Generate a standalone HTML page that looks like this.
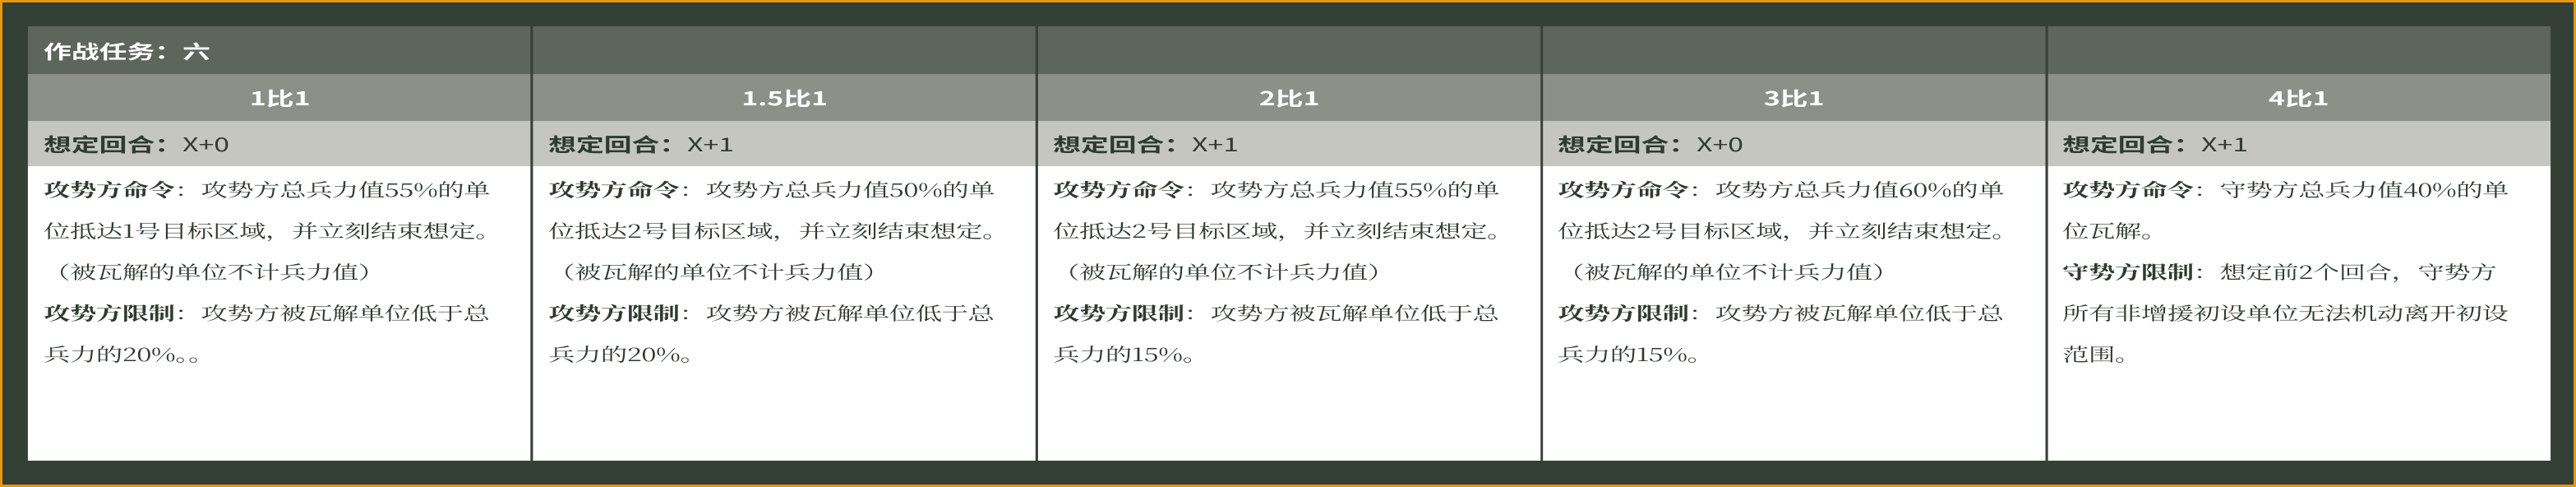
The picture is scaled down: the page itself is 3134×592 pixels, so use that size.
<!DOCTYPE html>
<html><head><meta charset="utf-8"><style>
html,body{margin:0;padding:0}
body{width:3134px;height:592px;overflow:hidden;background:#e8960c;position:relative}
.bg{position:absolute;left:3px;top:3px;right:3px;bottom:3px;background:#344035}
.wrap{position:absolute;left:0;top:0;width:2132px;height:592px;transform:scaleX(1.47);transform-origin:0 0;font-family:"Noto Serif CJK SC",serif;color:#2f3a30}
.col{position:absolute;top:32px;width:417.3px;height:528px;overflow:hidden}
.r1{position:absolute;left:0;right:0;top:0;height:58px;background:#5d655c}
.r2{position:absolute;left:0;right:0;top:58px;height:57px;background:#8d9089;color:#fff;font-weight:bold;font-size:23px;line-height:57px;text-align:center;font-family:"Noto Sans CJK SC",sans-serif}
.r3{position:absolute;left:0;right:0;top:115px;height:55px;background:#c5c6c0;font-size:23px;line-height:55px;padding-left:13px;font-family:"Noto Sans CJK SC",sans-serif}
.r3 b{font-weight:bold}
.r4{position:absolute;left:0;right:0;top:170px;bottom:0;background:#fff;font-size:22px;line-height:50px;padding:4px 0 0 13px;box-sizing:border-box;white-space:nowrap;letter-spacing:-0.3px}
.div{position:absolute;top:32px;width:2px;height:530px;background:#3a3f3a}
.title{position:absolute;left:13px;top:0;line-height:58px;color:#fff;font-weight:bold;font-size:23px;font-family:"Noto Sans CJK SC",sans-serif}
</style></head><body>
<div class="bg"></div>
<div class="wrap">
<div class="col" style="left:23.1px">
<div class="r1"><div class="title">作战任务：六</div></div>
<div class="r2">1比1</div>
<div class="r3"><b>想定回合：</b>X+0</div>
<div class="r4"><b>攻势方命令</b>：攻势方总兵力值55%的单<br>位抵达1号目标区域，并立刻结束想定。<br>（被瓦解的单位不计兵力值）<br><b>攻势方限制</b>：攻势方被瓦解单位低于总<br>兵力的20%。。</div>
</div>
<div class="col" style="left:440.8px">
<div class="r1"></div>
<div class="r2">1.5比1</div>
<div class="r3"><b>想定回合：</b>X+1</div>
<div class="r4"><b>攻势方命令</b>：攻势方总兵力值50%的单<br>位抵达2号目标区域，并立刻结束想定。<br>（被瓦解的单位不计兵力值）<br><b>攻势方限制</b>：攻势方被瓦解单位低于总<br>兵力的20%。</div>
</div>
<div class="col" style="left:858.5px">
<div class="r1"></div>
<div class="r2">2比1</div>
<div class="r3"><b>想定回合：</b>X+1</div>
<div class="r4"><b>攻势方命令</b>：攻势方总兵力值55%的单<br>位抵达2号目标区域，并立刻结束想定。<br>（被瓦解的单位不计兵力值）<br><b>攻势方限制</b>：攻势方被瓦解单位低于总<br>兵力的15%。</div>
</div>
<div class="col" style="left:1276.2px">
<div class="r1"></div>
<div class="r2">3比1</div>
<div class="r3"><b>想定回合：</b>X+0</div>
<div class="r4"><b>攻势方命令</b>：攻势方总兵力值60%的单<br>位抵达2号目标区域，并立刻结束想定。<br>（被瓦解的单位不计兵力值）<br><b>攻势方限制</b>：攻势方被瓦解单位低于总<br>兵力的15%。</div>
</div>
<div class="col" style="left:1693.9px">
<div class="r1"></div>
<div class="r2">4比1</div>
<div class="r3"><b>想定回合：</b>X+1</div>
<div class="r4"><b>攻势方命令</b>：守势方总兵力值40%的单<br>位瓦解。<br><b>守势方限制</b>：想定前2个回合，守势方<br>所有非增援初设单位无法机动离开初设<br>范围。</div>
</div>
<div class="div" style="left:439.4px"></div>
<div class="div" style="left:857.1px"></div>
<div class="div" style="left:1274.8px"></div>
<div class="div" style="left:1692.5px"></div>
</div>
</body></html>
